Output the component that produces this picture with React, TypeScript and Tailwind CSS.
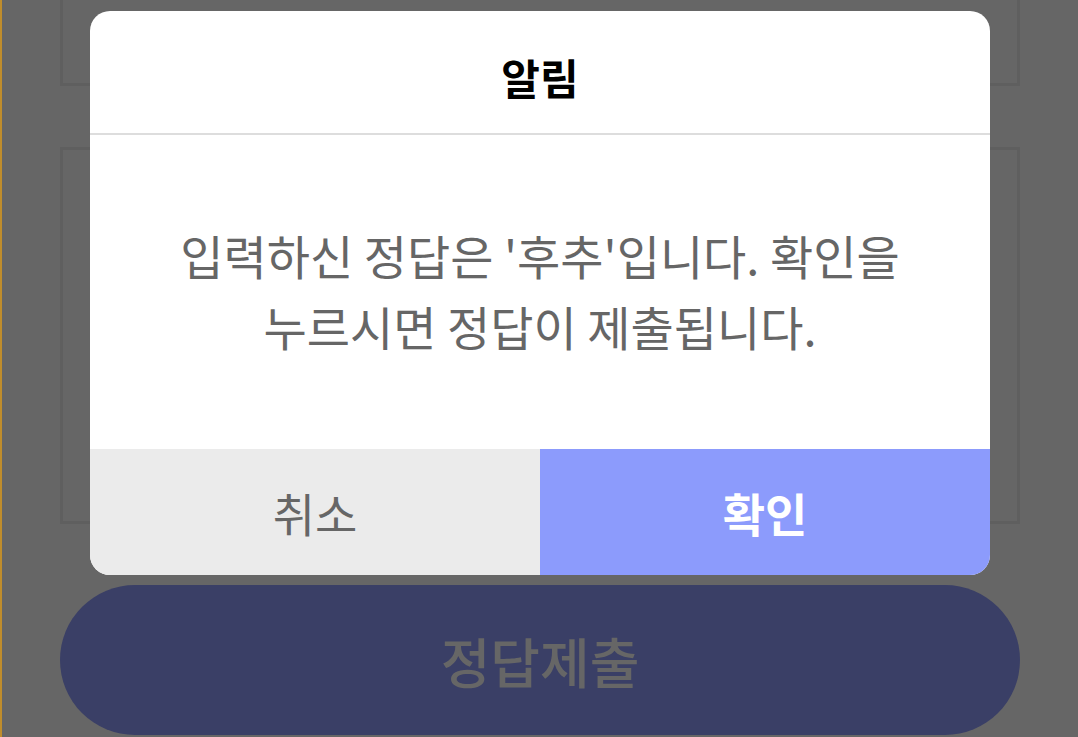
import React from "react";

const font = { fontFamily: '"Noto Sans CJK KR", "Noto Sans", sans-serif' };

export default function App() {
  return (
    <div
      className="relative w-[1078px] h-[737px] overflow-hidden bg-[#666666] border-l-[2px] border-[#c08d2c]"
      style={font}
    >
      {/* underlying page */}
      <div className="flex flex-col pl-[58px] pr-[58px]">
        <div className="h-[86px] border-x-[3px] border-b-[3px] border-[#5f5f5f]" />
        <div className="mt-[61px] h-[377px] border-[3px] border-[#5f5f5f]" />
        <div className="mt-[61px] h-[150px] rounded-full bg-[#3a3f66] flex items-center justify-center">
          <span className="text-[54px] font-medium text-[#666666] leading-none mt-[2px]">정답제출</span>
        </div>
      </div>

      {/* dialog */}
      <div className="absolute left-[88px] top-[11px] w-[900px] h-[564px] bg-white rounded-[20px] overflow-hidden flex flex-col">
        <div className="h-[124px] flex items-center justify-center border-b-[2px] border-[#dddddd] shrink-0">
          <span className="text-[42px] font-bold text-black leading-none mt-[10px]">알림</span>
        </div>
        <div className="flex-1 flex items-center justify-center text-center">
          <p className="text-[47px] font-normal leading-[71px] text-[#666666] mb-[4px]">
            입력하신 정답은 '후추'입니다. 확인을
            <br />
            누르시면 정답이 제출됩니다.
          </p>
        </div>
        <div className="h-[126px] flex shrink-0">
          <button className="flex-1 bg-[#ebebeb] flex items-center justify-center">
            <span className="text-[46px] font-normal text-[#666666] leading-none">취소</span>
          </button>
          <button className="flex-1 bg-[#8c9bfc] flex items-center justify-center">
            <span className="text-[46px] font-bold text-white leading-none">확인</span>
          </button>
        </div>
      </div>
    </div>
  );
}
